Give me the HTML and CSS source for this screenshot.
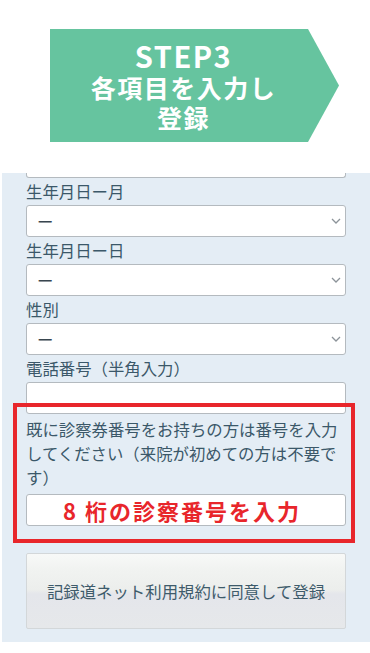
FILE: index.html
```html
<!DOCTYPE html>
<html lang="ja">
<head>
  <meta charset="UTF-8" />
  <meta name="viewport" content="width=device-width, initial-scale=1" />
  <title>STEP3 各項目を入力し登録</title>
  <link rel="stylesheet" href="styles.css">
</head>
<body>
  <div class="step">
    <div class="step-title">STEP3</div>
    <div class="step-text">各項目を入力し</div>
    <div class="step-text">登録</div>
  </div>

  <form class="form">
    <div class="field-cut"></div>

    <label class="label">生年月日ー月</label>
    <div class="select">
      <span>ー</span>
      <svg width="10" height="6" viewBox="0 0 10 6"><path d="M1 1l4 4 4-4" fill="none" stroke="#8c9399" stroke-width="1.3"/></svg>
    </div>

    <label class="label">生年月日ー日</label>
    <div class="select">
      <span>ー</span>
      <svg width="10" height="6" viewBox="0 0 10 6"><path d="M1 1l4 4 4-4" fill="none" stroke="#8c9399" stroke-width="1.3"/></svg>
    </div>

    <label class="label">性別</label>
    <div class="select">
      <span>ー</span>
      <svg width="10" height="6" viewBox="0 0 10 6"><path d="M1 1l4 4 4-4" fill="none" stroke="#8c9399" stroke-width="1.3"/></svg>
    </div>

    <label class="label">電話番号（半角入力）</label>
    <input class="input" type="tel">

    <div class="member-no">
      <div class="callout"></div>
      <p class="help">既に診察券番号をお持ちの方は番号を入力してください（来院が初めての方は不要です）</p>
      <input class="input input-hint" type="text" placeholder="8 桁の診察番号を入力">
    </div>

    <button type="button" class="submit">記録道ネット利用規約に同意して登録</button>
  </form>
</body>
</html>
```

FILE: styles.css
```css
body {
  margin: 0;
  background: #fff;
  font-family: "Noto Sans CJK JP", "Noto Sans", sans-serif;
}

/* STEP arrow */
.step {
  margin: 29px 0 0 50px;
  width: 289px;
  height: 113px;
  box-sizing: border-box;
  padding-right: 22px;
  background: #66c49f;
  clip-path: polygon(0 0, 258px 0, 100% 50%, 258px 100%, 0 100%);
  color: #fff;
  font-weight: bold;
  display: flex;
  flex-direction: column;
  justify-content: center;
  align-items: center;
}

.step-title {
  font-size: 29px;
  line-height: 33px;
  letter-spacing: 1.5px;
}

.step-text {
  font-size: 25px;
  line-height: 30px;
  letter-spacing: 1.5px;
}

/* Form panel */
.form {
  margin: 31px 0 0 2px;
  padding: 0 24px 13px;
  background: #e4edf5;
  color: #3b5869;
  font-size: 16.4px;
}

.field-cut {
  height: 4px;
  background: #fff;
  border: 1px solid #b4babf;
  border-top: none;
  border-radius: 0 0 3px 3px;
}

.label {
  display: block;
  height: 27px;
  line-height: 27px;
}

.select {
  height: 32px;
  box-sizing: border-box;
  background: #fff;
  border: 1px solid #b4babf;
  border-radius: 3px;
  padding: 0 4px 0 10px;
  display: flex;
  justify-content: space-between;
  align-items: center;
  color: #39464f;
}

.input {
  display: block;
  width: 100%;
  height: 32px;
  box-sizing: border-box;
  margin: 0;
  background: #fff;
  border: 1px solid #b4babf;
  border-radius: 3px;
  font-family: inherit;
}

.member-no {
  position: relative;
}

.callout {
  position: absolute;
  top: -11px;
  left: -13px;
  right: -9px;
  bottom: -17px;
  border: 4px solid #e8262b;
  pointer-events: none;
}

.help {
  margin: 0;
  padding: 3px 0 5px;
  line-height: 24px;
}

.input-hint {
  text-align: center;
  padding-right: 10px;
  font-size: 22px;
  font-weight: bold;
  letter-spacing: 2px;
}

.input-hint::placeholder {
  color: #e8262b;
  opacity: 1;
}

.submit {
  display: block;
  width: 100%;
  height: 76px;
  margin-top: 27px;
  border: 1px solid #d3d7d9;
  border-radius: 2px;
  background: linear-gradient(#f8f9f8 0%, #f1f3f1 20%, #eceeec 48%, #e4e6eb 54%, #e6e8ea 100%);
  color: #3e5b6b;
  font-family: inherit;
  font-size: 16.4px;
  cursor: pointer;
}
```
